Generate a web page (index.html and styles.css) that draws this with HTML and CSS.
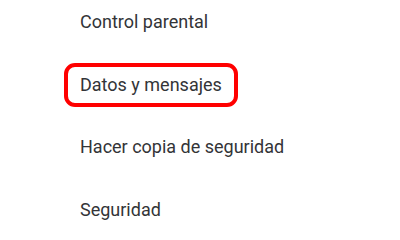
FILE: index.html
```html
<!DOCTYPE html>
<html lang="es">
<head>
<meta charset="utf-8">
<link rel="stylesheet" href="styles.css">
</head>
<body>
<ul class="menu">
  <li class="item"><span class="label">Control parental</span></li>
  <li class="item"><span class="label label--active">Datos y mensajes</span></li>
  <li class="item"><span class="label">Hacer copia de seguridad</span></li>
  <li class="item"><span class="label">Seguridad</span></li>
</ul>
</body>
</html>
```
FILE: styles.css
```css
html, body {
  margin: 0;
  padding: 0;
  background: #ffffff;
}
body {
  width: 400px;
  height: 234px;
  overflow: hidden;
  font-family: Roboto, "Noto Sans", sans-serif;
}
.menu {
  list-style: none;
  margin: 0;
  padding: 0 0 0 64px;
  display: flex;
  flex-direction: column;
}
.item {
  height: 62.5px;
  display: flex;
  align-items: flex-start;
}
.label {
  display: inline-block;
  font-size: 18px;
  line-height: 24px;
  color: #333437;
  padding: 6px 12px 6px 12px;
  border: 4px solid transparent;
  border-radius: 11px;
}
.label--active {
  border-color: #ff0000;
}
```
